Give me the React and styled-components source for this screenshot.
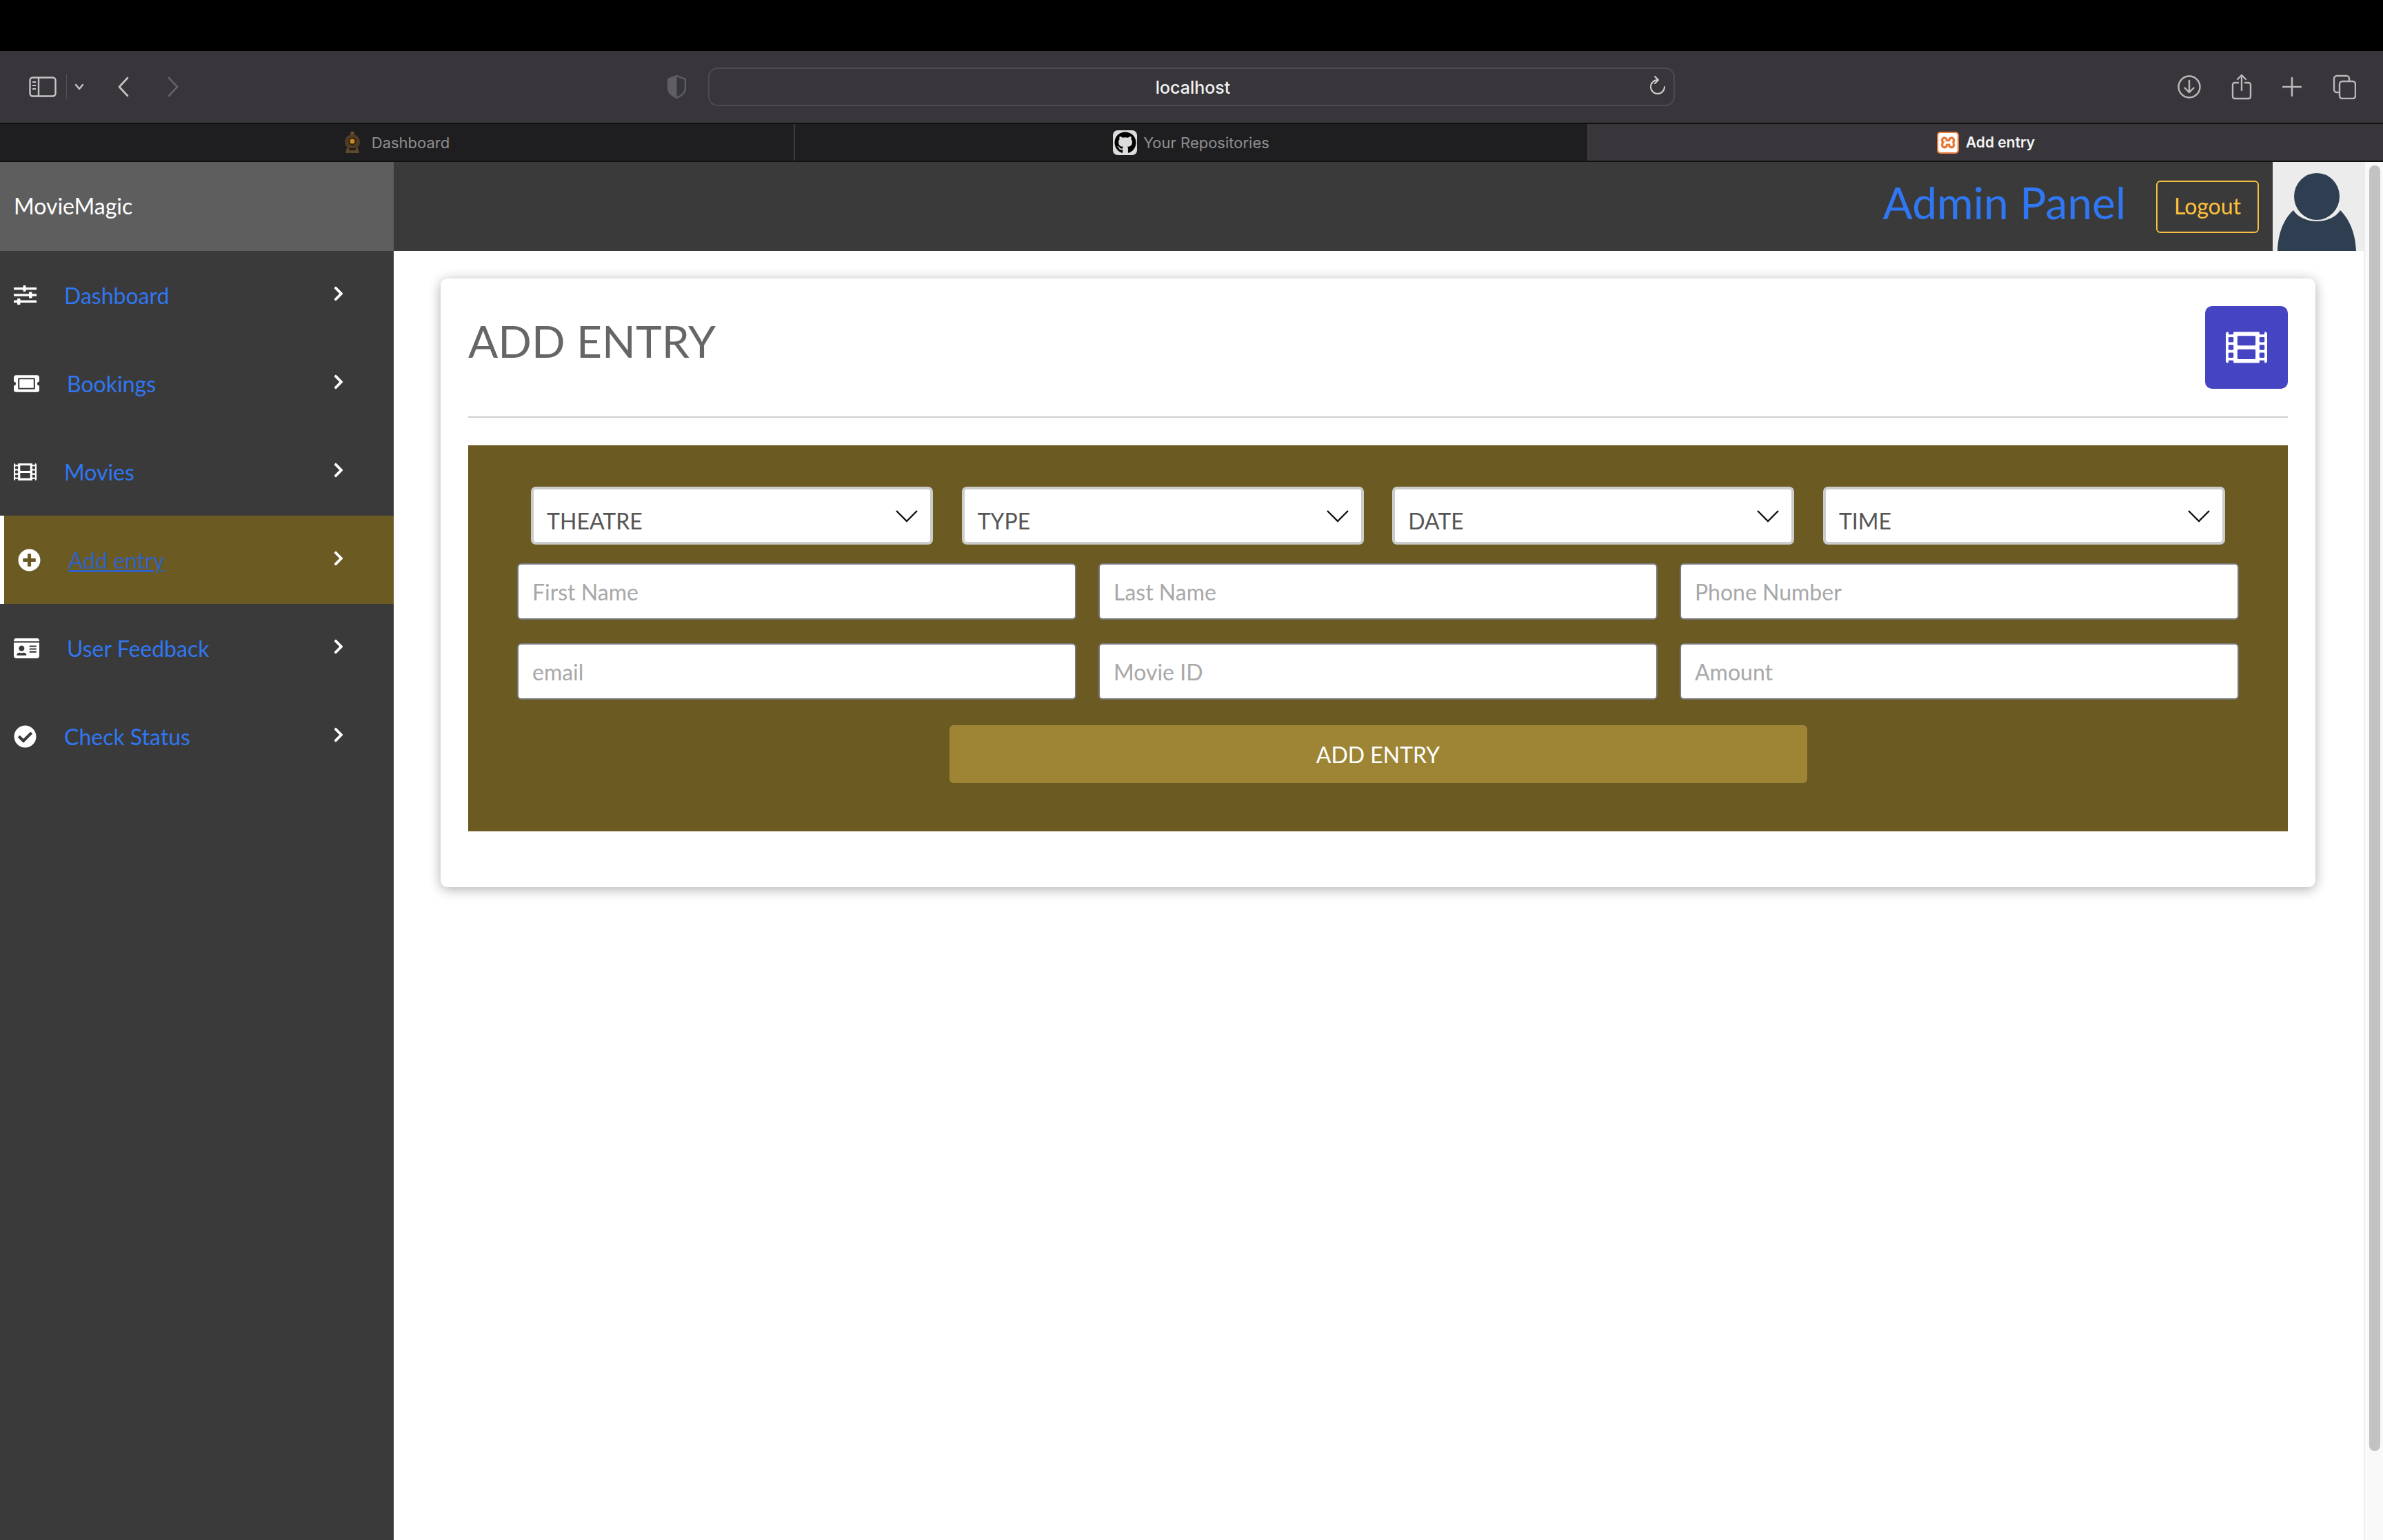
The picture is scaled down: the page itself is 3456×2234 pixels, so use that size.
import React from 'react';
import styled, { createGlobalStyle } from 'styled-components';
import { FaTicketAlt, FaFilm, FaPlusCircle, FaIdCard, FaCheckCircle, FaChevronRight, FaGithub } from 'react-icons/fa';
import { SiXampp } from 'react-icons/si';

const GlobalStyle = createGlobalStyle`
  html, body {
    margin: 0;
    padding: 0;
    background: #fff;
    overflow: hidden;
  }
  * {
    box-sizing: border-box;
  }
`;

const Page = styled.div`
  width: 3456px;
  height: 2234px;
  display: flex;
  flex-direction: column;
  font-family: Lato, "Liberation Sans", sans-serif;
  overflow: hidden;
`;

const MenuBar = styled.div`
  height: 74px;
  background: #000;
`;

const Toolbar = styled.div`
  height: 106px;
  display: grid;
  grid-template-columns: 1027px 1402px 1fr;
  align-items: center;
  background: #38363b;
  border-bottom: 2px solid #111;
`;

const ToolLeft = styled.div`
  display: flex;
  align-items: center;
  padding-left: 42px;
  padding-right: 32px;
  color: #c4c4c6;
`;

const ToolRight = styled.div`
  display: flex;
  align-items: center;
  justify-content: flex-end;
  padding-right: 39px;
  color: #b9b9bb;
`;

const ToolDivider = styled.div`
  width: 1px;
  height: 36px;
  background: #55535a;
  margin: 0 11px 0 14px;
`;

const UrlBar = styled.div`
  height: 56px;
  position: relative;
  display: flex;
  align-items: center;
  justify-content: center;
  padding: 1px 0 0 4px;
  border: 2px solid #4d4b50;
  border-radius: 14px;
  font-family: Inter, "Liberation Sans", sans-serif;
  font-size: 25px;
  font-weight: 500;
  color: #f2f2f2;
`;

const Reload = styled.span`
  position: absolute;
  right: 11px;
  top: 10px;
  line-height: 0;
  color: #d0d0d0;
`;

const TabStrip = styled.div`
  height: 55px;
  display: grid;
  grid-template-columns: 1151px 1151px 1fr;
  border-bottom: 2px solid #111;
`;

const Tab = styled.div`
  display: flex;
  align-items: center;
  justify-content: center;
  gap: ${(p) => p.$gap || 10}px;
  background: ${(p) => (p.$active ? '#38363b' : '#1e1e20')};
  border-left: ${(p) => (p.$first ? 'none' : '2px solid #3b3b3d')};
  font-family: Inter, "Liberation Sans", sans-serif;
  font-size: ${(p) => (p.$active ? 21 : 22)}px;
  font-weight: ${(p) => (p.$active ? 600 : 400)};
  color: ${(p) => (p.$active ? '#f5f5f5' : '#8e8e90')};
`;

const GithubFavicon = styled.span`
  width: 35px;
  height: 36px;
  display: flex;
  align-items: center;
  justify-content: center;
  background: #dcdcdc;
  border-radius: 7px;
  color: #000;
`;

const XamppFavicon = styled.span`
  width: 32px;
  height: 32px;
  display: flex;
  align-items: center;
  justify-content: center;
  background: #e87c3a;
  border-radius: 5px;
  color: #fff;
`;

const Body = styled.div`
  flex: 1;
  display: flex;
  min-height: 0;
`;

const Sidebar = styled.aside`
  width: 571px;
  flex-shrink: 0;
  background: #3a3a3a;
`;

const Brand = styled.div`
  height: 129px;
  display: flex;
  align-items: center;
  padding: 0 0 3px 20px;
  background: #5e5e5e;
  color: #fff;
  font-size: 32px;
`;

const NavItem = styled.a`
  height: 128px;
  display: flex;
  align-items: center;
  padding-left: 20px;
  background: ${(p) => (p.$active ? '#6c5a23' : 'transparent')};
  border-left: ${(p) => (p.$active ? '6px solid #fff' : 'none')};
  color: #fff;
`;

const NavLabel = styled.span`
  margin-left: 40px;
  font-size: 32px;
  color: ${(p) => (p.$active ? '#2f62c4' : '#3077f3')};
  text-decoration: ${(p) => (p.$active ? 'underline' : 'none')};
`;

const NavArrow = styled.span`
  margin-left: auto;
  margin-right: 68px;
  margin-top: -4px;
  line-height: 0;
`;

const Main = styled.div`
  flex: 1;
  min-width: 0;
  display: flex;
  flex-direction: column;
`;

const Header = styled.header`
  height: 129px;
  display: flex;
  align-items: center;
  justify-content: flex-end;
  background: #3a3a3a;
`;

const PanelTitle = styled.h1`
  margin: -12px 44px 0 0;
  font-size: 64px;
  font-weight: 400;
  color: #3077f3;
`;

const LogoutButton = styled.button`
  width: 149px;
  height: 76px;
  margin-right: 20px;
  padding-bottom: 3px;
  background: transparent;
  border: 2px solid #f5bf3f;
  border-radius: 6px;
  font-family: inherit;
  font-size: 32px;
  color: #ffc13b;
`;

const Avatar = styled.div`
  width: 132px;
  height: 129px;
  background: #ececec;
  line-height: 0;
`;

const Content = styled.main`
  flex: 1;
  padding: 40px 70px 0 68px;
  background: #fff;
`;

const Card = styled.section`
  height: 883px;
  padding: 40px;
  background: #fff;
  border-radius: 10px;
  box-shadow: 0 3px 18px rgba(0, 0, 0, 0.32);
`;

const CardHead = styled.div`
  height: 162px;
  display: flex;
  justify-content: space-between;
  align-items: flex-start;
  border-bottom: 2px solid #cfcfcf;
`;

const CardTitle = styled.h2`
  margin: 12px 0 0;
  font-size: 64px;
  font-weight: 400;
  color: #666;
`;

const IconTile = styled.div`
  width: 120px;
  height: 120px;
  display: flex;
  align-items: center;
  justify-content: center;
  background: #4545c4;
  border-radius: 10px;
  color: #fff;
`;

const FormPanel = styled.form`
  height: 560px;
  margin-top: 40px;
  padding: 60px 70px 0;
  background: #6c5a23;
`;

const SelectRow = styled.div`
  display: grid;
  grid-template-columns: repeat(4, 583px);
  justify-content: center;
  column-gap: 41.6px;
  margin-bottom: 27px;
`;

const Select = styled.div`
  height: 84px;
  display: flex;
  justify-content: space-between;
  padding: 26px 18px 0 19px;
  background: #fff;
  border: 4px solid #ccc;
  border-radius: 7px;
  font-size: 32px;
  color: #555;
`;

const SelectChevron = styled.span`
  margin-top: 4px;
  line-height: 0;
  color: #111;
`;

const InputGrid = styled.div`
  display: grid;
  grid-template-columns: repeat(3, 811px);
  grid-auto-rows: 82px;
  justify-content: center;
  column-gap: 32px;
  row-gap: 34px;
`;

const Input = styled.input`
  width: 100%;
  height: 100%;
  padding: 0 20px;
  background: #fff;
  border: 2px solid #77777a;
  border-radius: 6px;
  font-family: inherit;
  font-size: 32px;
  color: #555;
  outline: none;

  &::placeholder {
    color: #a8a8a8;
  }
`;

const SubmitRow = styled.div`
  display: flex;
  justify-content: center;
  margin-top: 37px;
`;

const Submit = styled.button`
  width: 1244px;
  height: 84px;
  background: #9d8535;
  border: none;
  border-radius: 6px;
  font-family: inherit;
  font-size: 32px;
  color: #fff;
`;

const ScrollTrack = styled.div`
  width: 28px;
  flex-shrink: 0;
  padding: 5px 6px 0 6px;
  background: #f9f9f9;
  border-left: 2px solid #ececec;
`;

const ScrollThumb = styled.div`
  width: 16px;
  height: 1865px;
  background: #c2c2c2;
  border-radius: 8px;
`;

function SlidersIcon() {
  return (
    <svg width="33" height="28" viewBox="0 0 33 28" fill="#fff">
      <rect x="0" y="3" width="33" height="3.4" />
      <rect x="13.5" y="0" width="4" height="9" rx="1" />
      <rect x="0" y="12.3" width="33" height="3.4" />
      <rect x="22" y="9.5" width="4.5" height="9" rx="1" />
      <rect x="0" y="21.6" width="33" height="3.4" />
      <rect x="5" y="19" width="4.5" height="9" rx="1" />
    </svg>
  );
}

function ToolChevron() {
  return (
    <svg width="14" height="12" viewBox="0 0 14 12" fill="none" stroke="currentColor" strokeWidth="2.4" strokeLinecap="round" strokeLinejoin="round">
      <path d="M2 3l5 6 5-6" />
    </svg>
  );
}

function SidebarToggle() {
  return (
    <svg width="40" height="30" viewBox="0 0 40 30" fill="none" stroke="currentColor" strokeWidth="2.4">
      <rect x="1.5" y="1.5" width="37" height="27" rx="4" />
      <path d="M14 2v26" />
      <path d="M5 8h5M5 13h5M5 18h5" strokeWidth="2" />
    </svg>
  );
}

function LampFavicon() {
  return (
    <svg width="24" height="31" viewBox="0 0 24 31">
      <rect x="9.5" y="0" width="5" height="7" fill="#6e5128" />
      <circle cx="12" cy="15" r="11" fill="#4f3c24" />
      <circle cx="12" cy="14" r="5.5" fill="#2a2118" />
      <circle cx="12" cy="14" r="3.5" fill="#c98a1e" />
      <path d="M4 24h16l2 7H2z" fill="#5d4a2c" />
      <rect x="7" y="24" width="10" height="3" fill="#241e17" />
    </svg>
  );
}

function AvatarFigure() {
  return (
    <svg width="132" height="129" viewBox="0 0 132 129" fill="#2f3e50">
      <ellipse cx="64" cy="50" rx="33" ry="34" />
      <path d="M7 129c1-28 10-47 23-59 6 10 20 16 34 16s28-6 34-16c12 12 22 31 23 59z" />
    </svg>
  );
}

const menu = [
  { label: 'Dashboard', icon: <SlidersIcon /> },
  { label: 'Bookings', icon: <FaTicketAlt size={37} /> },
  { label: 'Movies', icon: <FaFilm size={33} /> },
  { label: 'Add entry', icon: <FaPlusCircle size={33} />, active: true },
  { label: 'User Feedback', icon: <FaIdCard size={37} /> },
  { label: 'Check Status', icon: <FaCheckCircle size={33} /> },
];

const selects = ['THEATRE', 'TYPE', 'DATE', 'TIME'];
const fields = ['First Name', 'Last Name', 'Phone Number', 'email', 'Movie ID', 'Amount'];

class App extends React.Component {
  render() {
    return (
      <Page>
        <GlobalStyle />
        <MenuBar />
        <Toolbar>
          <ToolLeft>
            <SidebarToggle />
            <ToolDivider />
            <ToolChevron />
            <svg style={{ marginLeft: 48 }} width="17" height="30" viewBox="0 0 17 30" fill="none" stroke="#c4c4c6" strokeWidth="2.6" strokeLinecap="round" strokeLinejoin="round">
              <path d="M15 2L3 15l12 13" />
            </svg>
            <svg style={{ marginLeft: 56 }} width="17" height="30" viewBox="0 0 17 30" fill="none" stroke="#646368" strokeWidth="2.6" strokeLinecap="round" strokeLinejoin="round">
              <path d="M2 2l12 13L2 28" />
            </svg>
            <svg style={{ marginLeft: 'auto' }} width="27" height="34" viewBox="0 0 27 34">
              <path d="M13.5 1L26 6v13c0 7-6 11-12.5 14C7 30 1 26 1 19V6z" fill="none" stroke="#5f5e63" strokeWidth="2.4" />
              <path d="M13.5 1L1 6v13c0 7 6 11 12.5 14z" fill="#5f5e63" />
            </svg>
          </ToolLeft>
          <UrlBar>
            localhost
            <Reload>
              <svg width="24" height="28" viewBox="0 0 24 28" fill="none" stroke="currentColor" strokeWidth="2" strokeLinecap="round" strokeLinejoin="round">
                <path d="M12 6A10 10 0 1 0 22 16" />
                <path d="M8 1l5 5-5 5" />
              </svg>
            </Reload>
          </UrlBar>
          <ToolRight>
            <svg width="34" height="36" viewBox="0 0 34 36" fill="none" stroke="currentColor" strokeWidth="2.4" strokeLinecap="round" strokeLinejoin="round">
              <circle cx="17" cy="18" r="15.5" />
              <path d="M17 9v17M10.5 19.5L17 26l6.5-6.5" />
            </svg>
            <svg style={{ marginLeft: 44 }} width="30" height="38" viewBox="0 0 30 38" fill="none" stroke="currentColor" strokeWidth="2.4" strokeLinecap="round" strokeLinejoin="round">
              <path d="M10 13H5a3 3 0 0 0-3 3v17a3 3 0 0 0 3 3h20a3 3 0 0 0 3-3V16a3 3 0 0 0-3-3h-5" />
              <path d="M15 24V2M9 8l6-6 6 6" />
            </svg>
            <svg style={{ marginLeft: 44 }} width="28" height="28" viewBox="0 0 28 28" fill="none" stroke="currentColor" strokeWidth="2.6" strokeLinecap="round">
              <path d="M14 1v26M1 14h26" />
            </svg>
            <svg style={{ marginLeft: 45 }} width="34" height="36" viewBox="0 0 34 36" fill="none" stroke="currentColor" strokeWidth="2.4">
              <rect x="10" y="10" width="23" height="25" rx="4" />
              <path d="M10 26H6a4 4 0 0 1-4-4V6a4 4 0 0 1 4-4h14a4 4 0 0 1 4 4v4" />
            </svg>
          </ToolRight>
        </Toolbar>
        <TabStrip>
          <Tab $first $gap={16}>
            <LampFavicon />
            Dashboard
          </Tab>
          <Tab $gap={9}>
            <GithubFavicon>
              <FaGithub size={32} />
            </GithubFavicon>
            Your Repositories
          </Tab>
          <Tab $active>
            <XamppFavicon>
              <SiXampp size={28} />
            </XamppFavicon>
            Add entry
          </Tab>
        </TabStrip>
        <Body>
          <Sidebar>
            <Brand>MovieMagic</Brand>
            {menu.map((item) => (
              <NavItem key={item.label} $active={item.active}>
                {item.icon}
                <NavLabel $active={item.active}>{item.label}</NavLabel>
                <NavArrow>
                  <FaChevronRight size={24} />
                </NavArrow>
              </NavItem>
            ))}
          </Sidebar>
          <Main>
            <Header>
              <PanelTitle>Admin Panel</PanelTitle>
              <LogoutButton>Logout</LogoutButton>
              <Avatar>
                <AvatarFigure />
              </Avatar>
            </Header>
            <Content>
              <Card>
                <CardHead>
                  <CardTitle>ADD ENTRY</CardTitle>
                  <IconTile>
                    <FaFilm size={60} />
                  </IconTile>
                </CardHead>
                <FormPanel>
                  <SelectRow>
                    {selects.map((name) => (
                      <Select key={name}>
                        {name}
                        <SelectChevron>
                          <svg width="32" height="18" viewBox="0 0 32 18" fill="none" stroke="currentColor" strokeWidth="2.4">
                            <path d="M1 1l15 15L31 1" />
                          </svg>
                        </SelectChevron>
                      </Select>
                    ))}
                  </SelectRow>
                  <InputGrid>
                    {fields.map((name) => (
                      <Input key={name} placeholder={name} />
                    ))}
                  </InputGrid>
                  <SubmitRow>
                    <Submit type="button">ADD ENTRY</Submit>
                  </SubmitRow>
                </FormPanel>
              </Card>
            </Content>
          </Main>
          <ScrollTrack>
            <ScrollThumb />
          </ScrollTrack>
        </Body>
      </Page>
    );
  }
}

export default App;
